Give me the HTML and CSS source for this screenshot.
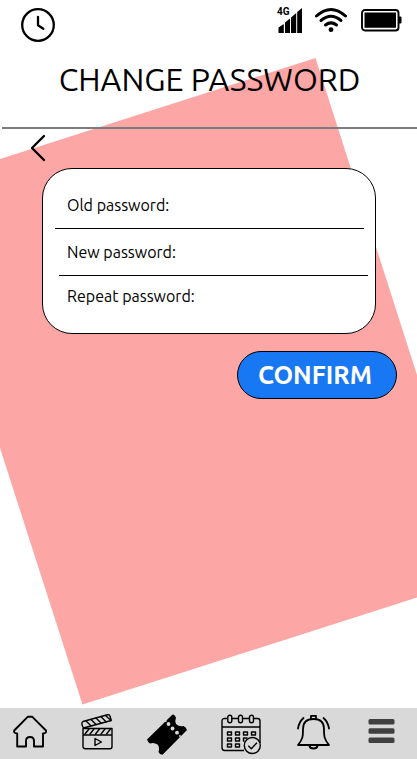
FILE: index.html
```html
<!DOCTYPE html>
<html lang="en">
<head>
<meta charset="utf-8">
<meta name="viewport" content="width=device-width, initial-scale=1">
<title>Change password</title>
<link rel="stylesheet" href="styles.css">
</head>
<body>
<div class="screen">
  <svg class="backdrop" width="417" height="759" viewBox="0 0 417 759" aria-hidden="true">
    <path d="M315.500 58L417 375V597.500L82.500 704.500L0 448V159Z" fill="#fca6a5"/>
  </svg>

  <div class="status">
    <svg class="clock" width="36" height="36" viewBox="0 0 36 36" aria-label="Clock">
      <circle cx="18" cy="18" r="15.800" fill="none" stroke="#000" stroke-width="2.300"/>
      <path d="M18 10v8.300l5.300 3.500" fill="none" stroke="#000" stroke-width="2.300" stroke-linecap="round" stroke-linejoin="round"/>
    </svg>
    <div class="signal">
      <svg width="26" height="26" viewBox="0 0 26 26" aria-label="Signal">
        <path d="M2.500 20.500L7.800 17V26H2.500ZM9 15.500L14 11.500V26H9ZM15 10.500L20.200 6V26H15ZM21.200 5L26 1V26H21.200Z"/>
      </svg>
      <span class="network">4G</span>
    </div>
    <svg width="34" height="26" viewBox="0 0 34 26" aria-label="Wi-Fi">
      <g fill="none" stroke="#000" stroke-width="3" stroke-linecap="round">
        <path d="M2.500 9Q17-4 31.500 9"/>
        <path d="M7 13.500Q17 5 27 13.500"/>
        <path d="M11.500 18Q17 13.800 22.500 18"/>
      </g>
      <circle cx="17" cy="22.700" r="2.400"/>
    </svg>
    <svg width="42" height="26" viewBox="0 0 42 26" aria-label="Battery">
      <rect x="2" y="3" width="36.500" height="20.500" rx="3" fill="none" stroke="#000" stroke-width="1.900"/>
      <path d="M4.500 5.500H36V20.800H4.500ZM39 9.500h1.500q1 0 1 1v5q0 1-1 1H39Z"/>
    </svg>
  </div>

  <header class="header"><h1>CHANGE PASSWORD</h1></header>

  <a class="back" href="#" aria-label="Back">
    <svg width="16" height="28" viewBox="0 0 16 28"><path d="M14 2L2 14L14 26" fill="none" stroke="#000" stroke-width="2.300" stroke-linecap="round" stroke-linejoin="round"/></svg>
  </a>

  <form class="form">
    <div class="card">
      <div class="row row-old"><label for="old">Old password:</label><input id="old" type="password"></div>
      <div class="row row-new"><label for="new">New password:</label><input id="new" type="password"></div>
      <div class="row row-repeat"><label for="repeat">Repeat password:</label><input id="repeat" type="password"></div>
    </div>
    <button class="confirm" type="button">CONFIRM</button>
  </form>

  <nav class="tabs">
    <a href="#" aria-label="Home">
      <svg width="34" height="42" viewBox="0 0 34 42" fill="none" stroke="#000" stroke-width="1.900" stroke-linejoin="round" stroke-linecap="round">
        <path d="M14.700 2.800L1.200 16.500Q.500 19.300 4.200 19.500V32.500H13V27Q13 23 17 23T21 27V32.500H30V19.500Q33.700 19.300 33 16.500L19.300 2.800Z"/>
      </svg>
    </a>
    <a href="#" aria-label="Movies">
      <svg width="32" height="42" viewBox="0 0 32 42" fill="none" stroke="#000" stroke-width="1.400" stroke-linejoin="round" stroke-linecap="round">
        <path d="M2 7.500L26.500.800Q28.500.300 29 2.300L30.300 6.500L2.500 14Q-.500 9 2 7.500Z"/>
        <path d="M5 7L10 11.800M10 5.500L15 10.500M15 4L20 9M20 2.800L25 7.800M24.500 1.500L29.500 6"/>
        <path d="M2 14.500H31V32.500Q31 34.700 29 34.700H4.500Q2 34.700 2 32.500ZM2 21H31"/>
        <path d="M4 20L8 15M9 20L13 15M14.500 20L18.500 15M20 20L24 15M25.500 20L29.500 15"/>
        <path d="M14 24.500V31.500L20.500 28Z"/>
      </svg>
    </a>
    <a href="#" aria-label="Tickets">
      <svg width="40" height="42" viewBox="0 0 40 42">
        <path d="M26.500.500Q27.500 1 29 3.500Q27.500 7 29 10Q32 12.800 36.500 12Q39 13 40 16L15.500 40.800Q12.500 40.500 11.500 38Q13 33.500 10.500 30.500Q7 28 3 29.500Q1 28.500 0 25.500L24 2Q25 .300 26.500.500Z"/>
        <g fill="#d9d9d9">
          <circle cx="21.500" cy="10" r="1.900"/><circle cx="25.500" cy="14.500" r="1.900"/><circle cx="30" cy="18.700" r="1.900"/>
          <circle cx="18.800" cy="7" r=".900"/><circle cx="33" cy="22" r=".900"/>
        </g>
      </svg>
    </a>
    <a href="#" aria-label="Calendar">
      <svg width="40" height="42" viewBox="0 0 40 42" fill="none" stroke="#000" stroke-width="1.400" stroke-linejoin="round">
        <path d="M6.500 4.500H3.500Q1 4.500 1 7V33.500Q1 36.500 3.500 36.500H23M1 13H39M10.500 4.500H17M21.500 4.500H28M32.500 4.500H36.500Q39 4.500 39 7V29"/>
        <rect x="6.800" y="1.200" width="4" height="7.500" rx="2"/><rect x="17.500" y="1.200" width="4" height="7.500" rx="2"/><rect x="28.500" y="1.200" width="4" height="7.500" rx="2"/>
        <path d="M6.500 18h4v3h-4zM14.500 18h4v3h-4zM22.500 18h4v3h-4zM30.500 18h4v3h-4zM6.500 24h4v3h-4zM14.500 24h4v3h-4zM26.500 24H22.500v3h1M6.500 30h4v3h-4zM14.500 30h4v3h-4z"/>
        <circle cx="31.300" cy="31.500" r="8"/>
        <path d="M27.300 31.700L30.300 34.700L36 28.700"/>
      </svg>
    </a>
    <a href="#" aria-label="Notifications">
      <svg width="36" height="42" viewBox="0 0 36 42" fill="none" stroke="#000" stroke-width="1.800" stroke-linejoin="round" stroke-linecap="round">
        <path d="M3 31C8 25 8 22 8 15Q8 5 18.500 5T29 15C29 22 29 25 34 31Z"/>
        <path d="M16 4.500V1.800H21V4.500M14.500 32Q15 34.500 18.500 34.500T22.500 32M8.500 4Q4 8 3 14.500M28.500 4Q33 8 34 14.500"/>
      </svg>
    </a>
    <a href="#" aria-label="Menu">
      <svg width="32" height="42" viewBox="0 0 32 42" fill="#404040">
        <rect x="3.500" y="5" width="26" height="5.500" rx="1.500"/><rect x="3.500" y="14.200" width="26" height="5.500" rx="1.500"/><rect x="3.500" y="23.500" width="26" height="5.500" rx="1.500"/>
      </svg>
    </a>
  </nav>
</div>
</body>
</html>
```
FILE: styles.css
```css
* { box-sizing: border-box; }

body {
  margin: 0;
  background: #fff;
  color: #000;
  font-family: Ubuntu, "Noto Sans", sans-serif;
  font-size: 16px;
}

svg { display: block; }

.screen {
  position: relative;
  display: flex;
  flex-direction: column;
  min-height: 100vh;
  overflow: hidden;
  isolation: isolate;
}

.backdrop {
  position: absolute;
  top: 0;
  left: 0;
  z-index: -1;
}

.status {
  display: flex;
  align-items: flex-start;
  gap: 12px;
  padding: 7px 15px 0 20px;
}

.clock { margin-right: auto; }

.signal { position: relative; }

.network {
  position: absolute;
  top: 0;
  left: 1px;
  font: bold 10px/10px Roboto, sans-serif;
}

.header {
  margin-left: 2px;
  padding: 12px 0 24px;
  border-bottom: 2px solid #7b7d7f;
}

.header h1 {
  margin: 0;
  font-size: 32px;
  font-weight: 400;
  line-height: 48px;
  text-align: center;
}

.back {
  align-self: flex-start;
  margin: 5px 0 0 30px;
}

.form {
  display: flex;
  flex-direction: column;
  gap: 17px;
  padding: 6px 20px 16px 42px;
}

.card {
  margin-right: 21px;
  padding-bottom: 17px;
  background: #fff;
  border: 1px solid #000;
  border-radius: 30px;
}

.row {
  display: flex;
  align-items: center;
  gap: 8px;
}

.row-old {
  height: 60px;
  margin: 0 11px 0 12px;
  padding: 12px 12px 0;
  border-bottom: 1px solid #000;
}

.row-new {
  height: 47px;
  margin: 0 7px 0 16px;
  padding: 0 8px;
  border-bottom: 1px solid #000;
}

.row-repeat {
  height: 40px;
  padding: 0 24px;
}

.row input {
  flex: 1;
  min-width: 0;
  padding: 0;
  border: 0;
  outline: 0;
  background: transparent;
  font: inherit;
}

.confirm {
  align-self: flex-end;
  width: 160px;
  height: 48px;
  padding: 0 4px 0 0;
  border: 1px solid #000;
  border-radius: 24px;
  background: #1877f2;
  color: #fff;
  font-family: inherit;
  font-size: 25px;
  font-weight: 700;
}

.tabs {
  display: flex;
  justify-content: space-between;
  margin-top: auto;
  padding: 6px 20px 3px 13px;
  background: #d9d9d9;
}
```
